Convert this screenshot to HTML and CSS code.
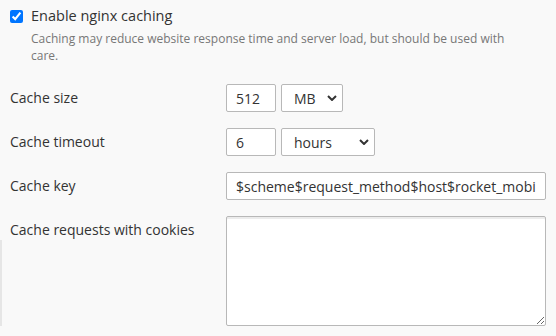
FILE: index.html
```html
<!DOCTYPE html>
<html lang="en">
<head>
  <meta charset="UTF-8" />
  <title>Nginx caching</title>
  <link rel="stylesheet" href="styles.css">
</head>
<body>
  <div class="edge"></div>

  <div class="settings">
    <div class="toggle">
      <label class="check">
        <input type="checkbox" checked>
        <span>Enable nginx caching</span>
      </label>
      <p class="hint">Caching may reduce website response time and server load, but should be used with care.</p>
    </div>

    <div class="row">
      <label class="name">Cache size</label>
      <div class="field">
        <input class="num" type="text" value="512">
        <select class="unit unit-mb">
          <option>MB</option>
          <option>GB</option>
        </select>
      </div>
    </div>

    <div class="row">
      <label class="name">Cache timeout</label>
      <div class="field">
        <input class="num" type="text" value="6">
        <select class="unit unit-time">
          <option>hours</option>
          <option>minutes</option>
          <option>days</option>
        </select>
      </div>
    </div>

    <div class="row">
      <label class="name">Cache key</label>
      <div class="field">
        <input class="wide" type="text" value="$scheme$request_method$host$rocket_mobile$request_uri">
      </div>
    </div>

    <div class="row">
      <label class="name">Cache requests with cookies</label>
      <div class="field">
        <textarea class="wide"></textarea>
      </div>
    </div>
  </div>
</body>
</html>
```

FILE: styles.css
```css
body {
  margin: 0;
  background-color: #f9f9f9;
  color: #333;
  font-family: 'Open Sans', 'Noto Sans', sans-serif;
  font-size: 14px;
  height: 336px;
  overflow: hidden;
}

.edge {
  position: absolute;
  left: 0;
  top: 240px;
  width: 2px;
  height: 86px;
  background: #e6e6e6;
}

.settings {
  padding: 6px 11px 0 10px;
}

.toggle {
  margin-bottom: 20px;
}

.check {
  display: flex;
  align-items: center;
  gap: 8px;
  font-size: 14.5px;
  line-height: 20px;
}

.check input {
  width: 13px;
  height: 13px;
  margin: 0;
  accent-color: #0075ff;
}

.hint {
  margin: 4px 0 0 21px;
  max-width: 490px;
  font-size: 12px;
  line-height: 17px;
  color: #777;
}

.row {
  display: grid;
  grid-template-columns: 216px 1fr;
  margin-bottom: 16px;
}

.name {
  line-height: 28px;
}

.field {
  display: flex;
  gap: 5px;
}

input[type=text], select, textarea {
  box-sizing: border-box;
  height: 28px;
  border: 1px solid #b8b8b8;
  border-radius: 2px;
  background-color: #fff;
  color: #333;
  font-family: inherit;
  font-size: 14px;
  margin: 0;
}

.num {
  width: 50px;
  padding: 0 9px;
}

.unit {
  appearance: none;
  padding: 0 0 0 12px;
  background-image: url("data:image/svg+xml,%3Csvg xmlns='http://www.w3.org/2000/svg' width='10' height='6' viewBox='0 0 10 6'%3E%3Cpath d='M1 1l4 4 4-4' fill='none' stroke='%23333' stroke-width='2'/%3E%3C/svg%3E");
  background-repeat: no-repeat;
  background-position: right 5px center;
}

.unit-mb {
  width: 62px;
}

.unit-time {
  width: 94px;
}

.wide {
  width: 320px;
  padding: 0 9px;
}

textarea.wide {
  height: 110px;
  resize: vertical;
  box-shadow: inset 0 2px 0 #ececec;
}
```
